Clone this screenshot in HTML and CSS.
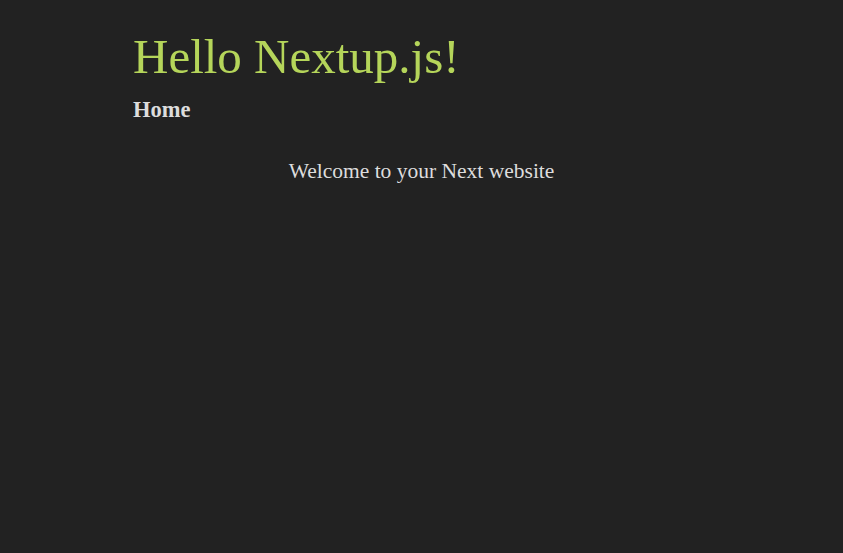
FILE: index.html
```html
<!DOCTYPE html>
<html>
<head>
<meta charset="utf-8">
<link rel="stylesheet" href="styles.css">
</head>
<body>
<div class="container">
  <header class="header">
    <h1 class="title">Hello Nextup.js!</h1>
    <nav class="nav"><a class="nav-link" href="#">Home</a></nav>
  </header>
  <main class="main">
    <p class="welcome">Welcome to your Next website</p>
  </main>
</div>
</body>
</html>
```
FILE: styles.css
```css
html, body {
  margin: 0;
  padding: 0;
  background: #222222;
  height: 100%;
}
body {
  font-family: "Liberation Serif", "Times New Roman", serif;
  color: #dddddd;
}
.container {
  width: 577px;
  margin: 0 auto;
  padding-top: 28px;
}
.title {
  margin: 0;
  font-size: 49px;
  font-weight: normal;
  line-height: 58px;
  color: #b5d55a;
}
.nav {
  margin-top: 11px;
}
.nav-link {
  color: #dddddd;
  text-decoration: none;
  font-weight: bold;
  font-size: 22.5px;
}
.main {
  margin-top: 36px;
}
.welcome {
  margin: 0;
  text-align: center;
  font-size: 21.5px;
}
```
